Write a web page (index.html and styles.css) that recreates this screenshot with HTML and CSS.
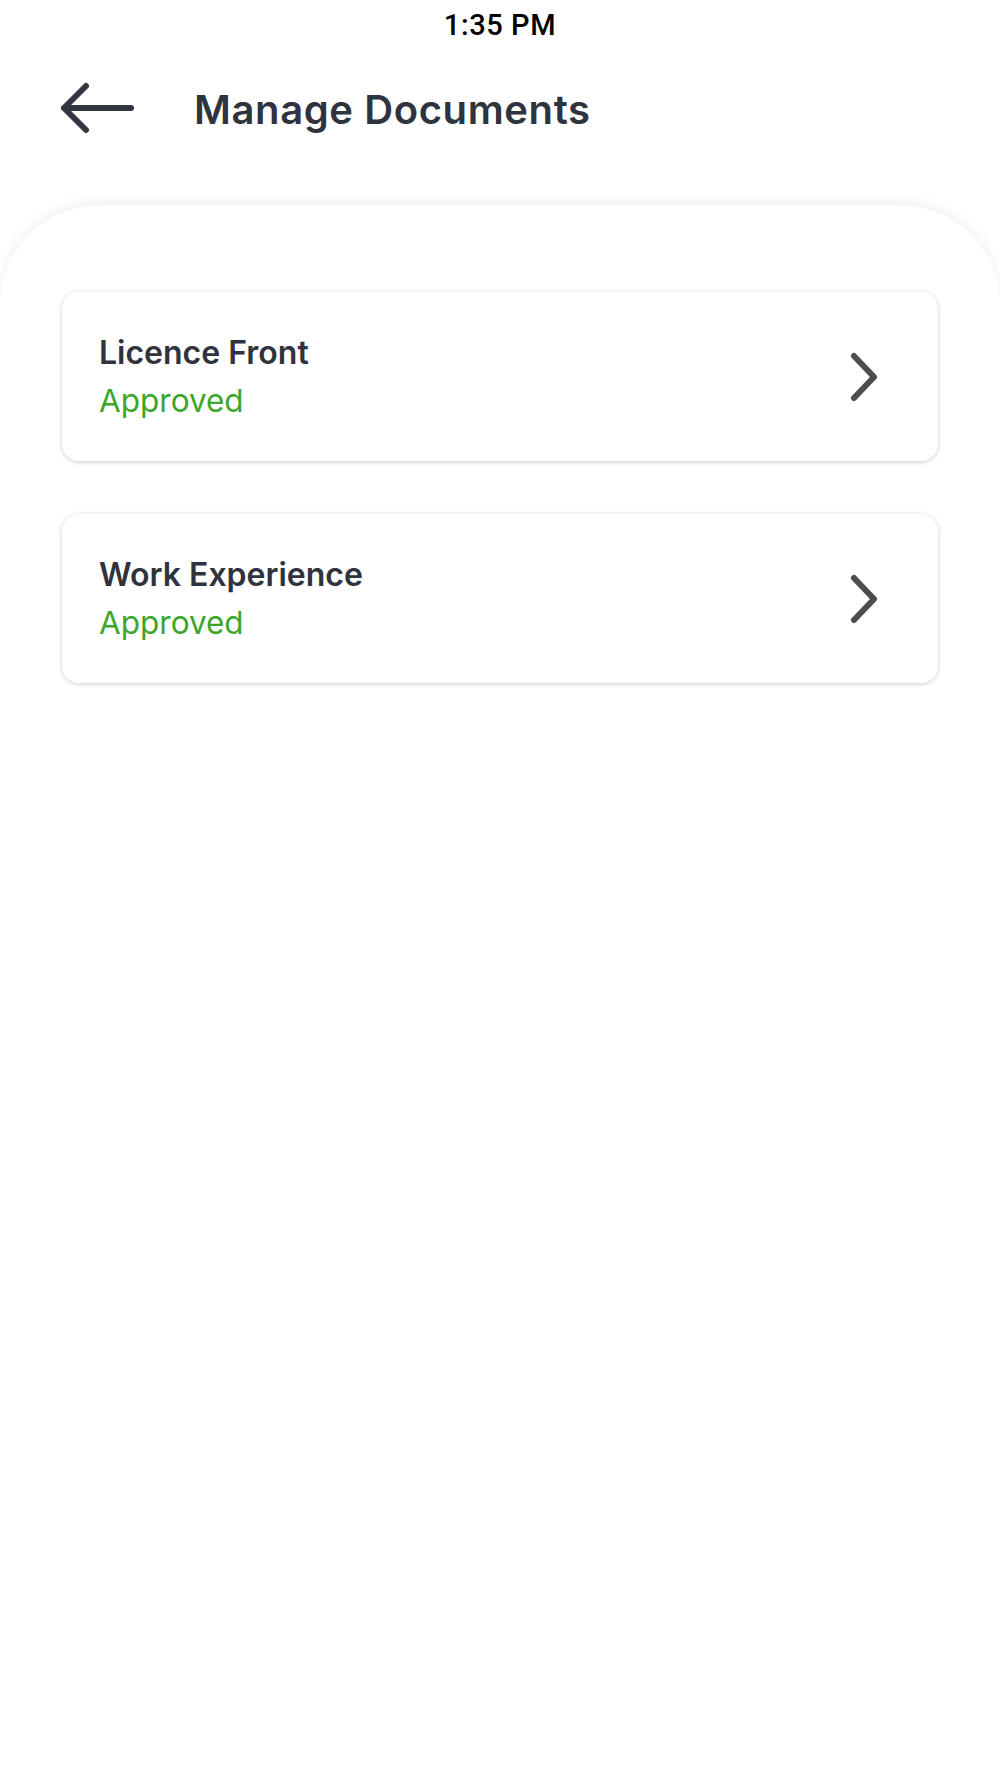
FILE: index.html
```html
<!DOCTYPE html>
<html>
<head>
<meta charset="utf-8">
<link rel="stylesheet" href="styles.css">
</head>
<body>
<div class="status">1:35 PM</div>
<header class="header">
  <svg class="back" width="76" height="56" viewBox="0 0 76 56">
    <path d="M26 5 L4 27 L26 49 M4 27 L71 27" fill="none" stroke="#323640" stroke-width="6" stroke-linecap="round" stroke-linejoin="round"/>
  </svg>
  <h1 class="title">Manage Documents</h1>
</header>
<main class="sheet">
  <div class="card">
    <div class="card-text">
      <div class="card-title">Licence Front</div>
      <div class="card-status">Approved</div>
    </div>
    <svg class="chev" width="30" height="50" viewBox="0 0 30 50">
      <path d="M4 4 L24 25 L4 46" fill="none" stroke="#4d4d50" stroke-width="6" stroke-linecap="round" stroke-linejoin="round"/>
    </svg>
  </div>
  <div class="card">
    <div class="card-text">
      <div class="card-title">Work Experience</div>
      <div class="card-status">Approved</div>
    </div>
    <svg class="chev" width="30" height="50" viewBox="0 0 30 50">
      <path d="M4 4 L24 25 L4 46" fill="none" stroke="#4d4d50" stroke-width="6" stroke-linecap="round" stroke-linejoin="round"/>
    </svg>
  </div>
</main>
</body>
</html>
```

FILE: styles.css
```css
html, body {
  margin: 0;
  padding: 0;
  background: #ffffff;
}
body {
  width: 1000px;
  height: 1778px;
  overflow: hidden;
  font-family: Inter, "Open Sans", sans-serif;
}
.status {
  height: 50px;
  line-height: 50px;
  text-align: center;
  font-family: Roboto, sans-serif;
  font-size: 29px;
  font-weight: 500;
  letter-spacing: 0.6px;
  color: #000;
}
.header {
  display: flex;
  align-items: center;
  height: 118px;
  padding-left: 60px;
}
.back {
  display: block;
}
.title {
  margin: 0 0 0 58px;
  font-size: 40px;
  font-weight: 600;
  color: #2f333d;
  letter-spacing: 0.6px;
}
.sheet {
  margin-top: 37px;
  height: 1573px;
  box-sizing: border-box;
  border-radius: 100px 100px 0 0;
  box-shadow: 0 -3px 14px rgba(0, 0, 0, 0.06);
  padding: 87px 62px 0;
  display: flex;
  flex-direction: column;
  gap: 53px;
  background: #fff;
}
.card {
  height: 169px;
  flex: none;
  box-sizing: border-box;
  border-radius: 17px;
  box-shadow: 0 1px 5px rgba(0, 0, 0, 0.2);
  display: flex;
  align-items: center;
  justify-content: space-between;
  padding: 0 58px 0 37px;
  background: #fff;
}
.card-title {
  font-size: 32px;
  line-height: 48px;
  font-weight: 600;
  color: #2f333d;
}
.card-status {
  font-size: 31.5px;
  line-height: 48px;
  color: #3ca62a;
}
.chev {
  display: block;
}
```
